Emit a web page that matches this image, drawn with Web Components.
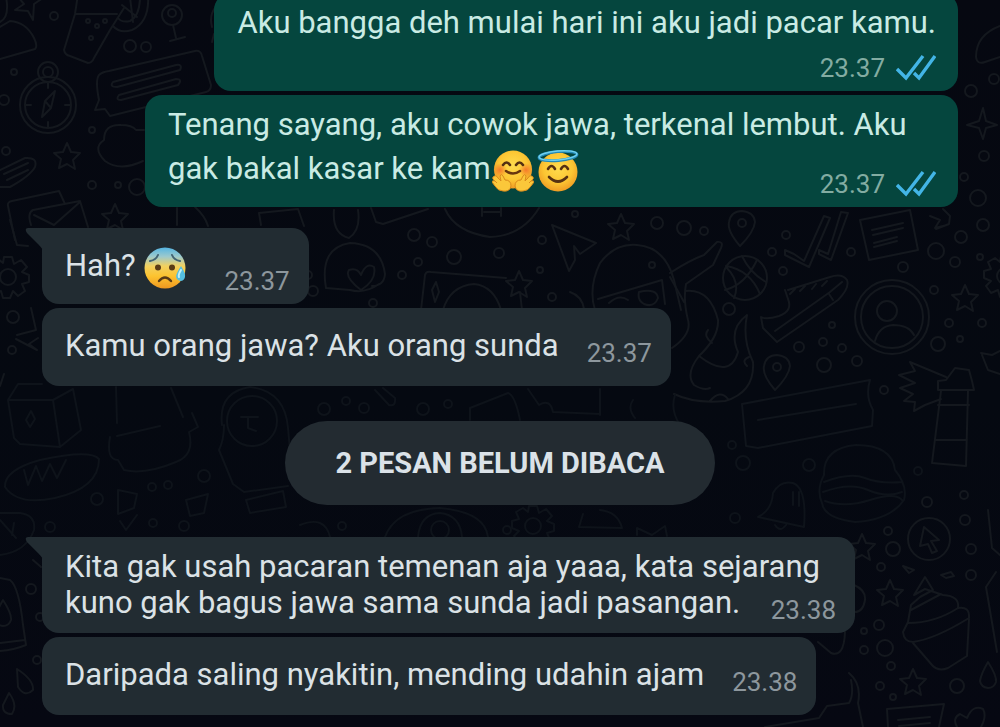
<!DOCTYPE html>
<html lang="id">
<head>
<meta charset="utf-8">
<meta name="viewport" content="width=device-width, initial-scale=1">
<title>Chat</title>
<style>
    body {
        margin: 0;
        background-color: #05070f;
        font-family: Roboto, "Liberation Sans", sans-serif;
    }
</style>
</head>
<body>
<chat-screen>
    <chat-wallpaper slot="wallpaper"></chat-wallpaper>
    <chat-message out stacked time="23.37">Aku bangga deh mulai hari ini aku jadi pacar kamu.</chat-message>
    <chat-message out emoji time="23.37">Tenang sayang, aku cowok jawa, terkenal lembut. Aku gak bakal kasar ke kam<chat-emoji name="hug"></chat-emoji><chat-emoji name="halo"></chat-emoji></chat-message>
    <chat-message first emoji time="23.37">Hah? <chat-emoji name="sweat"></chat-emoji></chat-message>
    <chat-message roomy time="23.37">Kamu orang jawa? Aku orang sunda</chat-message>
    <chat-unread>2 PESAN BELUM DIBACA</chat-unread>
    <chat-message first time="23.38">Kita gak usah pacaran temenan aja yaaa, kata sejarang kuno gak bagus jawa sama sunda jadi pasangan.</chat-message>
    <chat-message roomy time="23.38">Daripada saling nyakitin, mending udahin ajam</chat-message>
</chat-screen>

<template id="screen">
    <style>
    :host {
        display: flex;
        position: relative;
        height: 100vh;
        overflow: hidden;
    }
    .messages {
        flex: 1;
        display: flex;
        flex-direction: column;
        justify-content: flex-end;
        gap: 4px;
        padding: 0 42px 12px;
        position: relative;
        box-sizing: border-box;
    }
    </style>
    <slot name="wallpaper"></slot>
    <main class="messages"><slot></slot></main>
</template>

<template id="message">
    <style>
    :host {
        display: flow-root;
        align-self: flex-start;
        position: relative;
        box-sizing: border-box;
        max-width: 813px;
        padding: 12px 19px 8px 23px;
        border-radius: 17px;
        background-color: #222c32;
        color: #dbe2e6;
        font-size: 31px;
        line-height: 36px;
    }
    :host([out]) {
        align-self: flex-end;
        padding-right: 22px;
        background-color: #05463e;
        color: #c9ebe4;
    }
    :host([roomy]) {
        padding-top: 20px;
        padding-bottom: 18px;
    }
    :host([first]) {
        margin-top: 17px;
        border-top-left-radius: 0;
    }
    .meta {
        float: right;
        display: flex;
        align-items: center;
        gap: 11px;
        margin: 10px 0 0 28px;
        font-size: 26px;
        line-height: 30px;
        color: #8d979d;
    }
    :host([out]) .meta {
        color: #83aca2;
    }
    :host([emoji]) .meta {
        margin-top: 26px;
    }
    :host([stacked]) .meta {
        float: none;
        justify-content: flex-end;
        margin-top: 12px;
    }
    :host([stacked]) .text {
        display: block;
    }
    :host([emoji][first]) .meta {
        margin-left: 36px;
    }
    .ticks {
        display: none;
        width: 40px;
        height: 28px;
    }
    :host([out]) .ticks {
        display: block;
    }
    .tail {
        display: none;
        position: absolute;
        top: 0;
        left: -17px;
        width: 18px;
        height: 22px;
        fill: #222c32;
    }
    :host([first]) .tail {
        display: block;
    }
    </style>
    <svg class="tail" viewBox="0 0 18 22" aria-hidden="true"><path d="M3 0H18V22Q16 19 13 16L2 5Q-1 0 3 0Z"/></svg>
    <span class="text"><slot></slot></span>
    <span class="meta">
        <time></time>
        <svg class="ticks" viewBox="0 0 40 28" fill="none" stroke="#43b5e6" stroke-width="3.4" aria-hidden="true">
            <path d="M1 15L10 24L27 2"/>
            <path d="M18 19L23 24L39 2"/>
        </svg>
    </span>
</template>

<template id="unread">
    <style>
    :host {
        display: block;
        align-self: center;
        margin: 31px 0 11px;
        padding: 24px 50px;
        border-radius: 42px;
        background-color: #232b31;
        color: #dbe2e8;
        font-size: 29px;
        font-weight: 700;
        line-height: 36px;
    }
    </style>
    <slot></slot>
</template>

<template id="emoji">
    <style>
    :host {
        display: inline-block;
        width: 42px;
        height: 42px;
        margin: 7px 2px 0 1px;
        vertical-align: -13px;
    }
    svg {
        display: block;
        width: 100%;
        height: 100%;
    }
    g[data-name] {
        display: none;
    }
    :host([name="hug"]) [data-name="hug"],
    :host([name="halo"]) [data-name="halo"],
    :host([name="sweat"]) [data-name="sweat"] {
        display: inline;
    }
    </style>
    <svg viewBox="0 0 42 42" fill="none" stroke-linecap="round" stroke-linejoin="round" aria-hidden="true">
        <defs>
            <radialGradient id="skin" cx=".5" cy=".4" r=".62">
                <stop offset="0" stop-color="#ffdc4e"/>
                <stop offset=".6" stop-color="#fcc633"/>
                <stop offset="1" stop-color="#ee9822"/>
            </radialGradient>
            <linearGradient id="cold" x1="0" y1="0" x2="0" y2="1">
                <stop offset="0" stop-color="#55b5e2"/>
                <stop offset=".22" stop-color="#9cc9cd"/>
                <stop offset=".45" stop-color="#f2d160"/>
                <stop offset=".7" stop-color="#fdc32f"/>
                <stop offset="1" stop-color="#ee9720"/>
            </linearGradient>
            <radialGradient id="blush">
                <stop offset="0" stop-color="#f4712a" stop-opacity=".9"/>
                <stop offset="1" stop-color="#f4712a" stop-opacity="0"/>
            </radialGradient>
        </defs>
        <g data-name="hug">
            <circle cx="21" cy="19.500" r="19" fill="url(#skin)"/>
            <circle cx="8" cy="20" r="7" fill="url(#blush)"/>
            <circle cx="34" cy="20" r="7" fill="url(#blush)"/>
            <path d="M11 15Q14.500 10 18 15M24 15Q27.500 10 31 15" stroke="#563112" stroke-width="2.600"/>
            <path d="M14 21Q21 26 28 21" stroke="#68360f" stroke-width="2.600"/>
            <g fill="#fbc73a" stroke="#d98a1c" stroke-width="1">
                <path d="M1 27Q4 24 6 28L9 31L8 26Q9 23 11 26L13 30Q19 30 19 36Q18 42 11 41Q6 41 3 36L0 32Q0 30 3 31L5 33L1 29Z"/>
                <path d="M41 27Q38 24 36 28L33 31L34 26Q33 23 31 26L29 30Q23 30 23 36Q24 42 31 41Q36 41 39 36L42 32Q42 30 39 31L37 33L41 29Z"/>
            </g>
        </g>
        <g data-name="halo">
            <circle cx="21" cy="22" r="19.500" fill="url(#skin)"/>
            <path d="M11 19Q14.500 13 18 19M24 19Q27.500 13 31 19" stroke="#563112" stroke-width="2.600"/>
            <path d="M12 27Q21 36 30 27" stroke="#563112" stroke-width="2.600"/>
            <ellipse cx="21" cy="6" rx="19" ry="4.500" transform="rotate(-5 21 6)" stroke="#2389b8" stroke-width="3"/>
            <ellipse cx="21" cy="5.500" rx="19" ry="4.500" transform="rotate(-5 21 6)" stroke="#6fd0ec" stroke-width="1.400"/>
        </g>
        <g data-name="sweat">
            <circle cx="21" cy="21" r="20.500" fill="url(#cold)"/>
            <path d="M6 14Q12 13 14 8M28 8Q30 13 36 14" stroke="#426373" stroke-width="2"/>
            <circle cx="14" cy="20.500" r="3" fill="#593b16"/>
            <circle cx="28" cy="20.500" r="3" fill="#593b16"/>
            <path d="M15 34Q21 27 27 34" stroke="#593b16" stroke-width="2.400"/>
            <path d="M37 19Q42 27 41 30Q40 34 36.500 34Q32 33 32 29Q33 25 37 19Z" fill="#55bfe0"/>
            <path d="M37 23Q34 28 35 30" stroke="#c4f1f7" stroke-width="2"/>
        </g>
    </svg>
</template>

<template id="wallpaper">
    <style>
    :host {
        display: block;
        position: absolute;
        inset: 0;
        background: linear-gradient(#060811, #050911 55%, #060812);
    }
    svg {
        display: block;
        width: 100%;
        height: 100%;
    }
    </style>
    <svg viewBox="0 0 1000 727" preserveAspectRatio="xMidYMid slice" fill="none" stroke="#14181e" stroke-width="2" stroke-linecap="round" stroke-linejoin="round" aria-hidden="true">
        <defs>
            <path id="star" d="M0-13L4-4L13-3L6 4L8 13L0 8L-8 12L-6 3L-13-3L-4-4Z"/>
            <path id="drop" d="M0-14Q9 0 8 6Q6 12 0 12Q-7 11-8 5Q-7-2 0-14Z"/>
            <g id="gear"><circle r="8"/><path d="M-4-20H4L6-13L13-17L19-10L14-5L21-2V5L14 7L17 14L10 19L5 14L2 21H-5L-7 14L-14 17L-19 10L-14 5L-21 2V-5L-14-7L-17-14L-10-18L-5-14Z"/></g>
            <g id="pin"><path d="M-2 20Q-15 5-13-4Q-11-15 0-15Q12-14 13-4Q12 6-2 20Z"/><circle cy="-3" r="4"/></g>
        </defs>
        <!-- top left -->
        <path d="M14-8L24 4L15 10L28 11L33 20L34 4L46-4M0 22Q8 18 7 4L6-4"/>
        <path d="M0 59L35 49Q38 46 34 38Q26 22 10 21L0 27"/>
        <path d="M78-6L75 14L64 50Q65 55 70 56L88 63Q92 63 94 58L110 30L124 8M75 14L117 14"/>
        <path d="M148-6Q150 22 132 30Q120 34 113 26M140-4Q140 16 130 21Q122 23 118 18M122 5L137 17M130-3L133 22"/>
        <circle cx="88" cy="21" r="2"/><circle cx="97" cy="26" r="2"/><circle cx="91" cy="38" r="2"/><circle cx="105" cy="21" r="2"/>
        <circle cx="172" cy="15" r="10"/><circle cx="172" cy="13" r="4"/><path d="M173 25L176 38M170 41L185 37"/>
        <circle cx="130" cy="46" r="6"/><circle cx="146" cy="47" r="5"/><circle cx="54" cy="16" r="4"/><circle cx="14" cy="72" r="3"/>
        <circle cx="48" cy="105" r="28"/><circle cx="48" cy="105" r="23"/><circle cx="48" cy="72" r="10"/><circle cx="48" cy="72" r="5"/>
        <path d="M55 91L51 108L42 117L45 101ZM45 101L51 108M48 83V88M48 122V127M26 105H31M65 105H70"/>
        <path d="M95 110L99 100Q95 80 99 75Q102 72 109 71L195 51Q201 50 202 56L211 85Q211 91 206 92L110 116L105 109Z"/>
        <path d="M113 82L176 65Q183 64 180 70L117 87Q109 87 113 82ZM119 95L176 79Q183 79 178 85L121 100Q115 100 119 95Z"/>
        <path d="M143 161Q120 172 105 161Q92 148 104 140Q104 124 121 125Q132 125 136 130H144"/>
        <path d="M0 170L25 158Q38 157 35 167Q30 176 10 187H0M4 174L28 163M7 180L28 170"/>
        <use href="#star" x="67" y="156"/><use href="#star" x="115" y="217"/>
        <circle cx="92" cy="130" r="3"/><circle cx="4" cy="100" r="5"/><circle cx="6" cy="151" r="4"/><circle cx="92" cy="185" r="4"/><circle cx="118" cy="185" r="3"/><circle cx="137" cy="187" r="8"/>
        <path d="M15 240L8 206Q7 202 12 201L59 191L65 204M31 225Q27 213 33 210L80 201L88 227M34 215L54 225L80 202"/>
        <path d="M177 208V225M195 207Q205 216 208 226M261 225L259 213L298 209L304 226"/>
        <path d="M220 3Q208 12 212 27M214 34L212 42"/>
        <!-- under the sent messages -->
        <path d="M334 210Q332 234 349 238Q361 230 358 210M371 208L376 222L383 224L428 209M445 209Q455 232 490 237Q522 236 539 208M482 208L482 216M501 208L501 216M484 212H500"/>
        <path d="M326 288Q319 248 350 243Q381 244 385 274Q384 286 372 286M326 288L350 290Q365 294 379 284M361 290Q344 277 349 270Q357 267 361 275Q366 262 374 267Q377 280 361 290"/>
        <path d="M421 310L425 275Q426 271 431 272L506 278M443 310Q450 286 474 284Q494 286 501 310M520 292L522 310M432 290L436 282L439 292L435 302Z"/>
        <use href="#star" x="519" y="284"/><use href="#star" x="621" y="227"/>
        <path d="M552 225L596 243L580 254L574 246L575 260L569 271Z"/>
        <path d="M595 310Q588 288 600 263Q615 243 637 245Q665 247 674 280L681 310M598 299L662 280L665 304M609 303Q619 294 628 300M639 292Q657 288 658 298Q654 308 644 304Q637 300 639 292M570 292Q582 296 584 309"/>
        <circle cx="414" cy="235" r="6"/><circle cx="432" cy="242" r="5"/><circle cx="454" cy="257" r="7"/><circle cx="499" cy="253" r="5"/><circle cx="418" cy="262" r="4"/><circle cx="402" cy="275" r="4"/><circle cx="542" cy="240" r="4"/><circle cx="552" cy="297" r="4"/><circle cx="657" cy="223" r="6"/><circle cx="575" cy="214" r="3"/><circle cx="540" cy="270" r="3"/><circle cx="652" cy="265" r="3"/>
        <circle cx="313" cy="291" r="5"/><circle cx="308" cy="275" r="4"/><circle cx="373" cy="303" r="4"/>
        <!-- top right -->
        <path d="M1000 26Q976 35 976 57Q977 65 985 62L1000 57M983 108L986 121L997 125L986 128L983 139L979 128L967 125L979 121Z"/>
        <circle cx="971" cy="91" r="6"/><circle cx="994" cy="79" r="5"/><circle cx="984" cy="156" r="5"/><circle cx="978" cy="198" r="8"/><circle cx="964" cy="177" r="4"/><circle cx="983" cy="225" r="6"/>
        <use href="#pin" x="742" y="226"/><use href="#pin" x="777" y="370"/>
        <circle cx="684" cy="228" r="7"/><circle cx="704" cy="231" r="4"/><circle cx="786" cy="235" r="4"/><circle cx="772" cy="252" r="4"/><circle cx="783" cy="271" r="4"/><circle cx="851" cy="252" r="4"/><circle cx="729" cy="309" r="6"/>
        <circle cx="745" cy="278" r="22"/><path d="M726 266Q750 270 760 294M742 256Q750 273 766 282M725 290Q745 285 757 260M734 298Q741 282 726 267"/>
        <path d="M785 250L794 254L804 261L824 216L830 218L809 267L785 255ZM819 250L828 254L841 212L848 213L831 260L819 254Z"/>
        <path d="M860 220L910 210L918 250L869 260ZM872 230L903 223M873 235L903 228M874 243L897 237M874 247L897 241"/>
        <path d="M930 216L940 220L935 228L947 225M943 209L950 216L949 224L936 229"/>
        <circle cx="936" cy="251" r="8"/><circle cx="961" cy="237" r="6"/><circle cx="955" cy="262" r="5"/><circle cx="903" cy="267" r="5"/><circle cx="934" cy="290" r="4"/><circle cx="980" cy="257" r="3"/>
        <path d="M670 273Q690 260 704 255L717 242Q724 241 721 248L713 265L686 284Q683 300 688 320Q692 334 672 348M685 291Q710 288 718 320Q719 337 699 356Q730 380 738 352Q728 329 747 315Q742 339 753 362Q755 392 725 401Q695 404 674 394M699 356Q685 374 694 385Q704 391 710 388M712 343Q703 336 708 330M749 357Q741 360 747 366M710 401Q720 389 728 399M670 277L684 302"/>
        <path d="M785 290L788 299Q793 311 779 316Q766 320 761 317L763 328L777 342L838 300Q850 288 847 280Q842 273 830 277L788 290M775 331L830 292L842 282M829 294L833 300M790 294L795 289M800 291L805 286M812 289L816 284M822 286L827 281"/>
        <circle cx="892" cy="317" r="37"/><circle cx="892" cy="317" r="31"/><circle cx="887" cy="311" r="10"/><path d="M875 341Q879 326 893 325Q909 325 914 335"/>
        <use href="#star" x="965" y="298"/><use href="#gear" x="1005" y="276"/>
        <circle cx="949" cy="323" r="4"/><circle cx="982" cy="323" r="4"/><circle cx="938" cy="344" r="7"/><circle cx="960" cy="339" r="3"/><circle cx="799" cy="347" r="5"/><circle cx="823" cy="342" r="4"/><circle cx="842" cy="348" r="4"/><circle cx="824" cy="365" r="7"/><circle cx="857" cy="361" r="5"/><circle cx="832" cy="325" r="3"/><circle cx="884" cy="390" r="4"/>
        <path d="M946 377L910 362L915 371L899 375L915 383L900 388L913 394L904 401L915 402L914 411L925 405L941 399M946 380L955 368L969 370L972 381L974 390L938 390V381ZM941 391L932 463L966 466L968 391M938 405H969M935 440H967"/>
        <path d="M981 353L992 355L1000 351M982 355L988 370L1000 374"/>
        <g stroke="#10151c">
            <path d="M742 404L870 380Q865 396 873 410L872 426L758 448L746 446ZM758 420L856 404"/>
        </g>
        <!-- left edge -->
        <use href="#gear" x="8" y="277"/>
        <path d="M10 220L17 245L28 246M17 335L36 330L31 308M16 339L37 350L29 344L38 338M0 386L4 374"/>
        <circle cx="13" cy="317" r="6"/><circle cx="12" cy="350" r="4"/><circle cx="293" cy="280" r="4"/>
        <g stroke="#0e131a">
            <path d="M8 400L18 384H42M8 400L14 438L20 444L60 447L53 400ZM53 400L73 389L81 430L60 447M31 411L35 419L30 427L26 420Z"/>
            <path d="M5 487Q4 470 40 460Q90 449 99 459Q99 488 55 498Q18 506 5 487M24 470L28 485L36 466L42 481L50 464L57 478L66 460"/>
            <path d="M0 513H20Q36 515 34 530Q26 552 0 555M0 520L16 538M14 523L12 535"/>
            <path d="M116 387L117 423M171 388L183 417M110 437Q106 460 118 460L124 470Q145 475 176 462Q195 455 189 432L198 427L192 413M117 436L160 426"/>
            <path d="M222 425Q218 392 250 387Q285 391 288 428L290 450M224 425Q224 440 219 450L233 484L244 492L288 486M246 500L283 491L286 507L250 513Z"/>
            <circle cx="252" cy="421" r="25"/><path d="M241 417H258M248 418V428L256 431"/>
            <path d="M118 490L137 494L134 508L118 514ZM137 515L126 530L120 521M186 500L208 494L204 513L190 516Z"/>
            <circle cx="50" cy="527" r="5"/><circle cx="97" cy="499" r="6"/><circle cx="153" cy="523" r="4"/><circle cx="184" cy="526" r="5"/><circle cx="152" cy="487" r="4"/><circle cx="168" cy="485" r="4"/><circle cx="204" cy="476" r="6"/>
            <path d="M375 390L389 405Q396 407 395 398L383 388M470 408L508 393Q515 395 520 420M470 408V420M528 389L539 405Q550 398 553 412L600 414M600 389V415M633 400Q627 408 635 418M675 395Q670 410 680 425"/>
            <circle cx="324" cy="409" r="6"/><circle cx="346" cy="401" r="4"/><circle cx="364" cy="408" r="5"/><circle cx="423" cy="409" r="6"/><circle cx="448" cy="404" r="4"/>
            <path d="M385 537Q395 509 440 508Q485 512 488 537M418 537Q420 514 440 513Q460 515 462 537M300 525Q325 515 330 537M583 514L579 527L622 528Q618 512 600 510M637 535V528L652 535L665 526L667 536"/>
            <circle cx="440" cy="530" r="9"/><use href="#gear" x="533" y="526"/><circle cx="342" cy="526" r="4"/><circle cx="507" cy="530" r="4"/>
            <!-- burger and bell -->
            <path d="M824 475Q823 448 856 445Q892 445 895 470Q908 486 904 500Q890 520 855 522Q824 518 822 503Q816 490 824 475M824 482Q850 472 865 478T902 482M823 492Q850 482 868 490T902 492M825 501Q845 508 870 500T902 500"/>
            <path d="M758 517Q772 510 773 493Q780 480 793 483Q807 488 804 527ZM775 525Q780 533 786 525M793 492V505M799 492V506"/>
            <circle cx="743" cy="463" r="7"/><circle cx="809" cy="465" r="6"/><circle cx="732" cy="445" r="4"/><circle cx="735" cy="518" r="5"/><circle cx="918" cy="471" r="4"/>
        </g>
        <path d="M0 578L10 580Q19 587 23 625L26 645Q14 650 0 651M0 643L25 640M17 669Q34 680 33 690Q25 698 18 687ZM9 693Q18 705 12 714Q2 714 3 705ZM33 560L41 567"/>
        <use href="#drop" x="3" y="614"/>
        <circle cx="31" cy="589" r="5"/><circle cx="40" cy="617" r="4"/><circle cx="37" cy="660" r="4"/>
        <!-- bottom right -->
        <circle cx="929" cy="539" r="21"/><path d="M924 527L939 540L931 541L937 551L932 553L928 544L920 546Z"/>
        <use href="#star" x="862" y="547"/><use href="#star" x="890" y="593"/><use href="#star" x="913" y="682"/>
        <circle cx="888" cy="531" r="4"/><circle cx="893" cy="549" r="7"/><circle cx="965" cy="520" r="5"/><circle cx="971" cy="549" r="5"/><circle cx="971" cy="575" r="5"/><circle cx="881" cy="567" r="4"/><circle cx="927" cy="502" r="5"/><circle cx="964" cy="495" r="4"/><circle cx="879" cy="625" r="5"/><circle cx="864" cy="631" r="3"/><circle cx="864" cy="650" r="4"/><circle cx="885" cy="648" r="8"/><circle cx="891" cy="666" r="4"/><circle cx="880" cy="686" r="4"/><circle cx="957" cy="686" r="7"/><circle cx="893" cy="697" r="3"/>
        <path d="M903 566L914 570L909 573ZM941 575L951 572L954 576L946 578ZM988 510L992 548L1000 555M996 572L986 587L997 652"/>
        <path d="M925 577L933 590L920 597L911 605L908 622L903 632Q904 642 913 642Q935 639 969 618Q970 606 958 608Q960 596 943 595L925 589L914 595ZM911 610L941 594M908 623Q935 623 958 608M913 643L932 665Q938 672 948 668L967 656L969 619"/>
        <use href="#drop" x="988" y="676"/>
        <path d="M854 585Q866 590 865 600Q863 612 855 612M818 642L831 653Q844 658 845 632M849 673Q862 684 858 703L863 727M851 680Q854 695 849 703L827 706L819 718L765 727"/>
        <path d="M888 727L887 709L944 704L939 727M898 720L930 717M899 726L930 723M957 727Q952 718 960 714L967 718Q973 704 983 709Q987 716 981 727"/>
    </svg>
</template>

<script>
    const stamp = (host, id) => {
        const shadow = host.attachShadow({mode: 'open'});
        shadow.appendChild(document.getElementById(id).content.cloneNode(true));
        return shadow;
    };

    customElements.define('chat-screen', class extends HTMLElement {
        constructor() {
            super();
            stamp(this, 'screen');
        }
    });

    customElements.define('chat-wallpaper', class extends HTMLElement {
        constructor() {
            super();
            stamp(this, 'wallpaper');
        }
    });

    customElements.define('chat-message', class extends HTMLElement {
        constructor() {
            super();
            const shadow = stamp(this, 'message');
            shadow.querySelector('time').textContent = this.getAttribute('time');
        }
    });

    customElements.define('chat-unread', class extends HTMLElement {
        constructor() {
            super();
            stamp(this, 'unread');
        }
    });

    const emojiLabels = {hug: 'peluk', halo: 'malaikat', sweat: 'cemas'};

    customElements.define('chat-emoji', class extends HTMLElement {
        constructor() {
            super();
            stamp(this, 'emoji');
        }
        connectedCallback() {
            this.setAttribute('role', 'img');
            this.setAttribute('aria-label', emojiLabels[this.getAttribute('name')]);
        }
    });
</script>
</body>
</html>
